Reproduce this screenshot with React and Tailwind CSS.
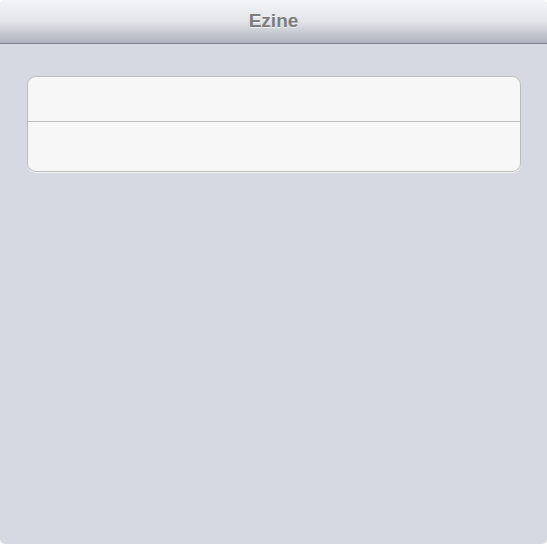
export default function App() {
  return (
    <div className="h-[544px] w-[547px] overflow-hidden rounded-[5px] bg-[#d6d9e1] font-['Liberation_Sans',Arial,sans-serif]">
      {/* Nav bar */}
      <div className="flex h-[44px] items-center justify-center border-b border-[#7d828f] bg-gradient-to-b from-[#f4f5f7] via-[#e2e4e8] to-[#afb3be]">
        <h1 className="text-[19px] font-bold text-[#7d7d7d] [text-shadow:0_1px_0_rgba(255,255,255,0.6)]">
          Ezine
        </h1>
      </div>

      {/* Grouped table */}
      <div className="px-[27px] pr-[26px] pt-[32px]">
        <div className="overflow-hidden rounded-[9px] border border-[#bcbcbc] bg-[#f7f7f7] shadow-[0_1px_0_rgba(255,255,255,0.7)]">
          <div className="h-[45px] border-b border-[#bcbcbc]" />
          <div className="h-[49px]" />
        </div>
      </div>
    </div>
  );
}
